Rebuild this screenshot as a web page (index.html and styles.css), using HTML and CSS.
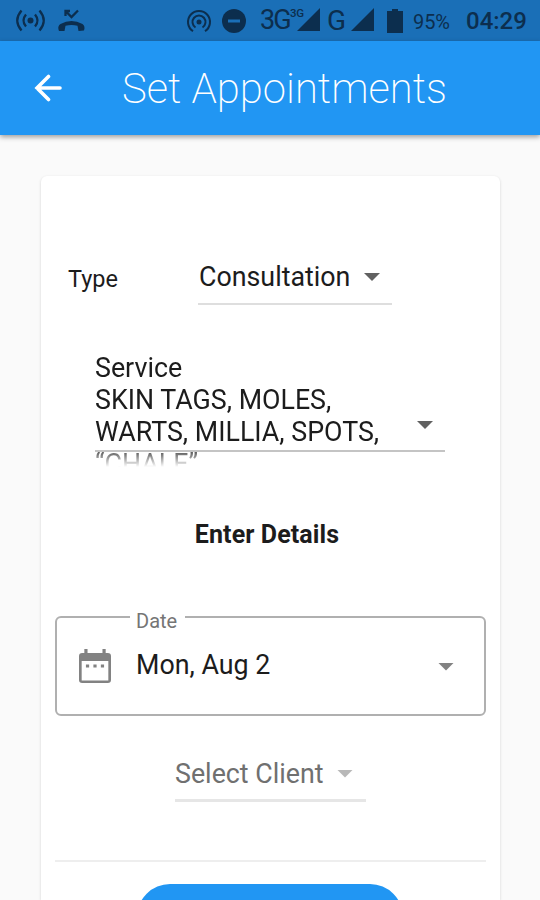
FILE: index.html
```
<!DOCTYPE html>
<html lang="en">
<head>
<meta charset="utf-8">
<title>Set Appointments</title>
<link rel="stylesheet" href="styles.css">
</head>
<body>
<div class="status">
  <svg class="status-icons" width="90" height="41" viewBox="0 0 90 41" fill="none" stroke="#0c2e4e" stroke-width="2.3">
    <circle cx="30.5" cy="20.5" r="3" fill="#0c2e4e" stroke="none"/>
    <path d="M26 14.5Q21 20.500 26 26.500M35 14.500Q40 20.500 35 26.500M21.500 10.500Q13 20.500 21.500 30.500M39.500 10.500Q48 20.500 39.500 30.500"/>
    <path d="M65.500 16V11H70M66 11.500L71.500 17L78 10.500"/>
    <path d="M58.500 29.500Q57.500 26 60.500 24Q71.500 18 82.500 24Q85.500 26 84 30.500L78.500 31L77.500 25.800Q71.500 24 65.500 25.800L64.500 31L59 31Z" fill="#0c2e4e" stroke="none"/>
  </svg>
  <svg class="radio" width="26" height="26" viewBox="0 0 26 26" fill="none" stroke="#0c2e4e" stroke-width="2">
    <circle cx="13" cy="14" r="2.500" fill="#0c2e4e" stroke="none"/>
    <path d="M9.500 19.500A6.500 6.500 0 1 1 16.500 19.500M7 23.200A11 11 0 1 1 19 23.200"/>
  </svg>
  <svg class="dnd" width="24" height="24" viewBox="0 0 24 24"><circle cx="12" cy="12" r="12" fill="#0c2e4e"/><path d="M6 12H18" stroke="#1a6fb7" stroke-width="3"/></svg>
  <span class="net">3G</span><span class="net-small">3G</span>
  <svg class="signal" width="23" height="23" viewBox="0 0 23 23"><path d="M23 0V23H0Z" fill="#0c2e4e"/></svg>
  <span class="net g">G</span>
  <svg class="signal two" width="23" height="23" viewBox="0 0 23 23"><path d="M23 0V23H0Z" fill="#0c2e4e"/></svg>
  <svg class="battery" width="16" height="24" viewBox="0 0 16 24"><path d="M5 0H11V2H16V24H0V2H5Z" fill="#0c2e4e"/></svg>
  <span class="percent">95%</span>
  <span class="clock">04:29</span>
</div>
<header class="appbar">
  <svg class="back" width="28" height="28" viewBox="0 0 28 28" fill="none" stroke="#fff" stroke-width="3.600" stroke-linecap="round" stroke-linejoin="miter"><path d="M14.500 2.500L3 14L14.500 25.500M3 14H26"/></svg>
  <h1>Set Appointments</h1>
</header>
<main class="card">
  <div class="type-row">
    <span class="label">Type</span>
    <div class="select"><span>Consultation</span><i class="caret"></i></div>
  </div>
  <div class="service">
    <div class="service-text">
      <div>Service</div><div>SKIN TAGS, MOLES,</div><div>WARTS, MILLIA, SPOTS,</div><div>“CHALE”</div>
    </div>
    <i class="caret"></i>
    <div class="service-line"></div>
  </div>
  <h2>Enter Details</h2>
  <div class="date">
    <span class="date-label">Date</span>
    <svg width="32" height="34" viewBox="0 0 30 34" preserveAspectRatio="none"><path d="M5 0H8V4H22V0H25V4H27Q30 4 30 7V31Q30 34 27 34H3Q0 34 0 31V7Q0 4 3 4H5ZM2.500 12V31.500H27.500V12Z" fill="#828282" fill-rule="evenodd"/><path d="M6.500 15.500h3v3h-3zM13.500 15.500h3v3h-3zM20.500 15.500h3v3h-3z" fill="#828282"/></svg>
    <span class="date-value">Mon, Aug 2</span>
    <i class="caret"></i>
  </div>
  <div class="client"><span>Select Client</span><i class="caret"></i></div>
  <div class="divider"></div>
  <div class="button"></div>
</main>
</body>
</html>
```
FILE: styles.css
```
* { box-sizing: border-box; }
body {
  margin: 0;
  height: 900px;
  overflow: hidden;
  background: #fafafa;
  color: #1c1c1c;
  font-family: Roboto, sans-serif;
  font-size: 26.8px;
  white-space: nowrap;
}
.status {
  height: 41px;
  display: flex;
  align-items: center;
  background: #1a6fb7;
  color: #0c2e4e;
}
.status > * { flex: none; }
.radio { margin-left: 96px; }
.dnd { margin-left: 10px; }
.net { margin-left: 14px; width: 30px; font-size: 27px; line-height: 38px; margin-top: -2px; letter-spacing: -2px; }
.net-small { width: 14px; font-size: 11.5px; font-weight: 500; align-self: flex-start; line-height: 15px; margin-top: 6px; letter-spacing: -.2px; }
.signal { margin-left: -7px; margin-top: -2px; }
.net.g { width: 18px; margin: 0 0 0 7px; font-size: 28px; }
.signal.two { margin-left: 6px; }
.battery { margin-left: 13px; }
.percent { margin-left: 10px; width: 38px; font-size: 20px; padding-top: 2px; letter-spacing: -.1px; }
.clock { margin-left: 15px; font-size: 24px; font-weight: 500; padding-top: 1px; }
.appbar {
  position: relative;
  height: 94px;
  display: flex;
  align-items: center;
  background: #2196f3;
  color: #fff;
  box-shadow: 0 2px 5px rgba(0, 0, 0, .38);
}
.back { margin-left: 34px; }
h1 { margin: 1px 0 0 60px; font-size: 41.8px; font-weight: 200; line-height: 44px; }
.card {
  margin: 41px 40px 0 41px;
  height: 724px;
  overflow: hidden;
  padding: 80px 14px 0;
  background: #fff;
  border-radius: 6px 6px 0 0;
  box-shadow: 0 1px 3px rgba(0, 0, 0, .16);
}
.caret {
  flex: none;
  width: 16px;
  height: 8px;
  background: #616161;
  clip-path: polygon(0 0, 100% 0, 50% 100%);
}
.type-row { display: flex; height: 49px; padding-left: 13px; }
.label { width: 130px; padding-top: 1px; font-size: 23.5px; line-height: 44px; }
.select {
  width: 194px;
  display: flex;
  align-items: center;
  padding: 0 12px 5px 1px;
  justify-content: space-between;
  border-bottom: 2px solid #dedede;
}
.service {
  position: relative;
  margin: 47px 41px 0 40px;
  height: 115px;
  display: flex;
  justify-content: space-between;
}
.service-text {
  line-height: 32px;
  height: 115px;
  overflow: hidden;
  -webkit-mask-image: linear-gradient(#000 94px, transparent 115px);
  mask-image: linear-gradient(#000 94px, transparent 115px);
}
.service .caret { margin: 69px 12px 0 0; }
.service-line { position: absolute; left: 0; right: 0; top: 98px; height: 2px; background: #c4c4c4; }
h2 { margin: 52px 0 0; padding-right: 7px; text-align: center; font-size: 25px; font-weight: 700; line-height: 32px; letter-spacing: .1px; }
.date {
  position: relative;
  margin-top: 65px;
  height: 100px;
  display: flex;
  align-items: center;
  border: 2px solid #b0b0b0;
  border-radius: 6px;
  padding: 0 30px 0 22px;
}
.date-label {
  position: absolute;
  left: 73px;
  top: -10px;
  width: 55px;
  padding-left: 6px;
  background: #fff;
  color: #757575;
  font-size: 20px;
  line-height: 26px;
}
.date-value { margin: -2px auto 0 25px; }
.date .caret { margin-top: 1px; background: #828282; }
.client {
  width: 191px;
  height: 48px;
  margin: 38px 0 0 120px;
  display: flex;
  align-items: center;
  justify-content: space-between;
  padding: 0 13px 6px 0;
  border-bottom: 3px solid #e6e6e6;
  color: #707070;
}
.client .caret { background: #b8b8b8; }
.divider { height: 2px; margin-top: 58px; background: #eee; }
.button { width: 266px; height: 66px; margin: 22px 0 0 82px; border-radius: 33px; background: #2196f3; }
```
